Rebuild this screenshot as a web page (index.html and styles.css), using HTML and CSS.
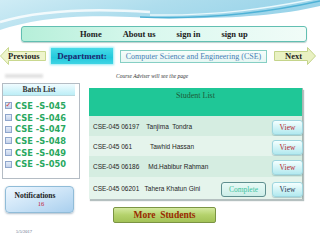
FILE: index.html
```html
<!DOCTYPE html>
<html>
<head>
<meta charset="utf-8">
<link rel="stylesheet" href="styles.css">
</head>
<body>
<svg class="wave" width="320" height="40" viewBox="0 0 320 40">
  <defs>
    <linearGradient id="wg" x1="0" y1="0" x2="1" y2="0.3">
      <stop offset="0" stop-color="#cfecf5"/>
      <stop offset="0.5" stop-color="#aedded"/>
      <stop offset="1" stop-color="#98d3e9"/>
    </linearGradient>
  </defs>
  <path d="M0,0 H320 V6 C270,18 200,20 130,17 C70,14 30,20 0,30 Z" fill="url(#wg)"/>
  <path d="M0,22 C40,10 90,8 150,12" stroke="#ffffff" stroke-width="2.5" fill="none" opacity="0.8"/>
  <path d="M140,17 C210,20 270,12 320,1" stroke="#4fb2d6" stroke-width="1.6" fill="none"/>
  <path d="M150,15 C220,16 270,8 320,-2" stroke="#e8f8fc" stroke-width="1.5" fill="none"/>
</svg>
<div class="page">
  <nav class="nav">
    <span>Home</span>
    <span>About us</span>
    <span>sign in</span>
    <span>sign up</span>
  </nav>

  <div class="toolbar">
    <div class="arrow prev">
      <svg width="46" height="18" viewBox="0 0 46 18"><polygon points="0.5,9 8.5,0.5 8.5,4.5 45.5,4.5 45.5,13.5 8.5,13.5 8.5,17.5" fill="#eef4cc" stroke="#c9d88f" stroke-width="1"/></svg>
      <span class="arrow-label">Previous</span>
    </div>
    <div class="dept">Department:</div>
    <div class="cse">Computer Science and Engineering (CSE)</div>
    <div class="arrow next">
      <svg width="42" height="18" viewBox="0 0 42 18"><polygon points="0.5,4.5 33.5,4.5 33.5,0.5 41.5,9 33.5,17.5 33.5,13.5 0.5,13.5" fill="#e9f1c2" stroke="#c4d48a" stroke-width="1"/></svg>
      <span class="arrow-label">Next</span>
    </div>
  </div>

  <div class="caption-row">
    <span class="blur"></span>
    <span class="caption">Course Adviser will see the page</span>
  </div>

  <div class="main">
    <aside class="side">
      <div class="batch">
        <div class="batch-head">Batch List</div>
        <ul class="batch-list">
          <li><span class="box checked">&#10003;</span>CSE -S-045</li>
          <li><span class="box"></span>CSE -S-046</li>
          <li><span class="box"></span>CSE -S-047</li>
          <li><span class="box"></span>CSE -S-048</li>
          <li><span class="box"></span>CSE -S-049</li>
          <li><span class="box"></span>CSE -S-050</li>
        </ul>
      </div>
      <div class="notif">
        <span class="notif-title">Notifications</span>
        <span class="notif-count">16</span>
      </div>
    </aside>

    <section class="content">
      <div class="table">
        <div class="thead">Student List</div>
        <div class="row r1">
          <span class="cell">CSE-045 06197    Tanjima  Tondra</span>
          <span class="btn view">View</span>
        </div>
        <div class="row r2">
          <span class="cell">CSE-045 061          Tawhid Hassan</span>
          <span class="btn view">View</span>
        </div>
        <div class="row r3">
          <span class="cell">CSE-045 06186     Md.Habibur Rahman</span>
          <span class="btn view">View</span>
        </div>
        <div class="row r4">
          <span class="cell">CSE-045 06201   Tahera Khatun Gini</span>
          <span class="btn complete">Complete</span>
          <span class="btn view dark">View</span>
        </div>
      </div>
      <div class="more">More&nbsp; Students</div>
    </section>
  </div>

  <div class="date">5/5/2017</div>
</div>
</body>
</html>
```

FILE: styles.css
```css
* { box-sizing: border-box; }
html, body { margin: 0; padding: 0; }
body {
  width: 320px;
  height: 240px;
  overflow: hidden;
  background: #ffffff;
  position: relative;
  font-family: "Liberation Serif", serif;
  color: #222;
}
.wave {
  position: absolute;
  left: 0;
  top: 0;
  z-index: 0;
}
.page {
  position: relative;
  z-index: 1;
  padding-top: 26px;
  display: flex;
  flex-direction: column;
}

/* nav */
.nav {
  margin-left: 21px;
  width: 286px;
  height: 16px;
  border: 1px solid #62bfb2;
  border-radius: 3px;
  background: linear-gradient(90deg, #b6efd9 0%, #d9f8ee 45%, #f1fcf8 100%);
  box-shadow: 0 1px 1px rgba(60,120,110,0.35);
  display: flex;
  align-items: center;
  padding-left: 58px;
  gap: 21px;
  font-weight: bold;
  font-size: 8.5px;
  color: #1c1c1c;
}

/* toolbar */
.toolbar {
  margin-top: 5px;
  height: 18px;
  display: flex;
  align-items: center;
}
.arrow {
  display: grid;
  height: 18px;
}
.arrow > svg, .arrow > .arrow-label {
  grid-area: 1 / 1;
}
.arrow-label {
  font-weight: bold;
  font-size: 8.5px;
  color: #1e1e1e;
  align-self: center;
}
.prev { width: 46px; }
.prev .arrow-label { padding-left: 8px; }
.next { width: 42px; margin-left: 7px; }
.next .arrow-label { padding-left: 11px; }
.dept {
  margin-left: 5px;
  width: 62px;
  height: 16px;
  background: linear-gradient(180deg, #47dbe8 0%, #23c9dc 60%, #3fd4e4 100%);
  box-shadow: 0 0 2px 1px rgba(80,220,235,0.6);
  color: #1b2870;
  font-weight: bold;
  font-size: 9px;
  display: flex;
  align-items: center;
  justify-content: center;
}
.cse {
  margin-left: 7px;
  width: 147px;
  height: 13px;
  border: 1px solid #86cfc4;
  background: linear-gradient(180deg, #f7fdfb, #e6f7f3);
  color: #4a7fb6;
  font-size: 8px;
  display: flex;
  align-items: center;
  justify-content: center;
  white-space: nowrap;
}

/* caption */
.caption-row {
  margin-top: 7px;
  height: 8px;
  display: flex;
  align-items: center;
}
.blur {
  margin-left: 5px;
  width: 38px;
  height: 4px;
  background: #e2e2e2;
  filter: blur(1px);
}
.caption {
  margin-left: 73px;
  font-style: italic;
  font-size: 5.5px;
  color: #333;
  white-space: nowrap;
}

/* main */
.main {
  margin-top: 3px;
  display: flex;
  align-items: flex-start;
}
.side {
  margin-left: 2px;
  width: 78px;
  display: flex;
  flex-direction: column;
}
.batch {
  height: 96px;
  border: 1px solid #b4bcc4;
  background: #fff;
  padding-right: 4px;
}
.batch-head {
  height: 12px;
  background: linear-gradient(180deg, #f0fcff 0%, #bdeef7 100%);
  border-bottom: 1px solid #b9d8de;
  font-weight: bold;
  font-size: 7.5px;
  color: #333;
  display: flex;
  align-items: center;
  justify-content: center;
}
.batch-list {
  list-style: none;
  margin: 4px 0 0 0;
  padding: 0 0 0 2px;
}
.batch-list li {
  height: 11.7px;
  display: flex;
  align-items: center;
  font-family: "DejaVu Sans", sans-serif;
  font-weight: bold;
  font-size: 8.3px;
  color: #2aa860;
  white-space: nowrap;
}
.box {
  width: 7px;
  height: 7px;
  margin-right: 3px;
  border: 1px solid #8fa6cc;
  background: linear-gradient(180deg, #e4ecf8, #c4d2ea);
  font-size: 7px;
  line-height: 5px;
  color: #d23030;
  display: flex;
  align-items: center;
  justify-content: center;
  font-weight: bold;
}
.notif {
  margin-top: 7px;
  margin-left: 3px;
  width: 69px;
  height: 27px;
  border: 1px solid #90bcd8;
  border-radius: 4px;
  background: linear-gradient(160deg, #eef7ff 0%, #c9e2f6 55%, #a9cfee 100%);
  box-shadow: 0 1px 2px rgba(80,110,140,0.45);
  display: flex;
  flex-direction: column;
  align-items: center;
  padding-top: 4px;
  padding-right: 9px;
}
.notif-title {
  font-weight: bold;
  font-size: 7.5px;
  color: #1a1a1a;
  line-height: 9px;
}
.notif-count {
  font-size: 6.5px;
  color: #c2183c;
  line-height: 8px;
  margin-left: 12px;
}

/* content */
.content {
  margin-left: 9px;
  padding-top: 5px;
  display: flex;
  flex-direction: column;
}
.table {
  width: 214px;
  border-right: 1px solid #a9b8b4;
  box-shadow: 1px 2px 1px rgba(120,140,140,0.55);
  display: flex;
  flex-direction: column;
}
.thead {
  height: 28px;
  background: #1fc797;
  color: #1d5a38;
  font-size: 8px;
  text-align: center;
  padding-top: 3px;
}
.row {
  display: flex;
  align-items: center;
}
.r1 { height: 20px; background: #d5ede1; }
.r2 { height: 20px; background: #e5f4ec; }
.r3 { height: 21px; background: #d5ede1; }
.r4 { height: 22px; background: #e5f4ec; }
.cell {
  flex: 1;
  padding-left: 4px;
  font-family: "Liberation Sans", sans-serif;
  font-size: 6.5px;
  color: #1e1e1e;
  white-space: pre;
}
.btn {
  height: 15px;
  border-radius: 3px;
  font-size: 7.5px;
  display: flex;
  align-items: center;
  justify-content: center;
  margin-top: 2px;
}
.view {
  width: 31px;
  margin-right: -1px;
  border: 1px solid #9fd6df;
  background: linear-gradient(180deg, #f4ffff 0%, #cdf2f5 60%, #b2e9ef 100%);
  color: #b8282c;
  box-shadow: 0 1px 1px rgba(90,140,150,0.4);
}
.view.dark { color: #27344f; }
.complete {
  width: 45px;
  margin-right: 6px;
  border: 1.5px solid #5f8f8f;
  background: linear-gradient(180deg, #e8faf6, #cdeee8);
  color: #3cc39e;
}
.more {
  margin-top: 8px;
  margin-left: 24px;
  width: 103px;
  height: 16px;
  border: 1px solid #7b9443;
  border-radius: 2px;
  background: linear-gradient(180deg, #d4e9a0 0%, #b4d26c 50%, #a3c257 100%);
  color: #9a2a00;
  font-weight: bold;
  font-size: 9.5px;
  display: flex;
  align-items: center;
  justify-content: center;
  white-space: nowrap;
}
.date {
  margin-top: 6px;
  margin-left: 16px;
  font-size: 4.5px;
  color: #5b6a88;
}
```
